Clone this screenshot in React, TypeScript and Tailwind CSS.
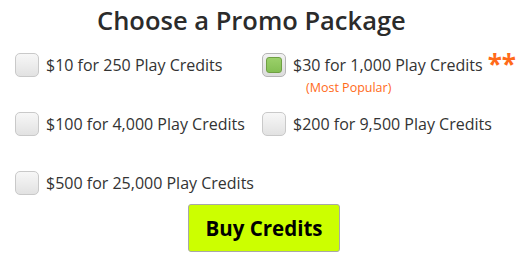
import React from 'react';

type Pkg = { id: number; label: string; checked?: boolean; popular?: boolean };

const rows: Pkg[][] = [
  [
    { id: 1, label: '$10 for 250 Play Credits' },
    { id: 2, label: '$30 for 1,000 Play Credits', checked: true, popular: true },
  ],
  [
    { id: 3, label: '$100 for 4,000 Play Credits' },
    { id: 4, label: '$200 for 9,500 Play Credits' },
  ],
  [{ id: 5, label: '$500 for 25,000 Play Credits' }],
];

const Box: React.FC<{ checked?: boolean }> = ({ checked }) => (
  <div
    className={`w-[24px] h-[24px] shrink-0 rounded-[5px] border flex items-center justify-center bg-gradient-to-b ${
      checked ? 'border-[#b5b5b5] from-[#f2f2f2] to-[#dcdcdc]' : 'border-[#c9c9c9] from-[#f7f7f7] to-[#e2e2e2]'
    }`}
  >
    {checked && <div className="w-[16px] h-[16px] rounded-[3px] border border-[#6f9f43] bg-gradient-to-b from-[#9bd06a] to-[#84bf53]" />}
  </div>
);

export default function App() {
  return (
    <div className="w-[528px] h-[260px] bg-white text-[#333] font-['Open_Sans',sans-serif] overflow-hidden">
      <h1 className="pl-[97px] pt-[3px] text-[25.5px] leading-[34px] font-semibold text-[#2b2b2b]">Choose a Promo Package</h1>
      <div className="mt-[16px] pl-[15px] flex flex-col gap-[35px]">
        {rows.map((row, i) => (
          <div key={i} className="grid grid-cols-[247px_1fr] h-[24px]">
            {row.map((p) => (
              <div key={p.id} className="relative flex items-center gap-[7px] h-[24px]">
                <Box checked={p.checked} />
                <span className="text-[16px] leading-[22px]">{p.label}</span>
                {p.popular && (
                  <>
                    <span className="absolute left-[44px] top-[27px] text-[12.5px] leading-[16px] text-[#ff6a1a]">(Most Popular)</span>
                    <span className="-ml-[2px] -mt-[2px] text-[26px] leading-[20px] font-bold text-[#ff6a1a]">**</span>
                  </>
                )}
              </div>
            ))}
          </div>
        ))}
      </div>
      <div className="mt-[9px] flex justify-center">
        <button className="w-[152px] h-[48px] rounded-[3px] border border-[#a8a8a8] bg-[#ccff00] text-[20.5px] font-bold text-black">
          Buy Credits
        </button>
      </div>
    </div>
  );
}
